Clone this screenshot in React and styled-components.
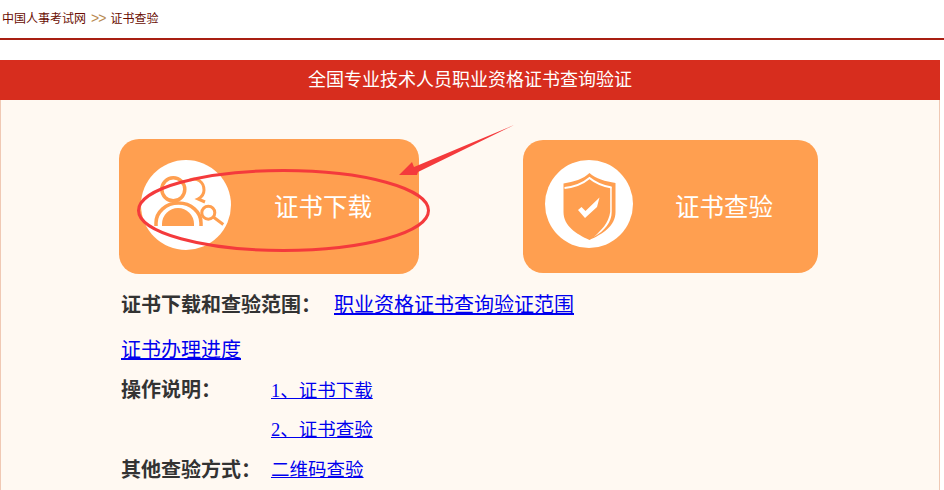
import React from "react";
import styled, { createGlobalStyle } from "styled-components";

const GlobalStyle = createGlobalStyle`
  html, body {
    margin: 0;
    padding: 0;
    background: #fff;
    font-family: "Liberation Serif", "Noto Sans CJK SC", serif;
  }
`;

const Page = styled.div`
  position: relative;
  width: 944px;
  height: 490px;
  overflow: hidden;
`;

const Crumbs = styled.div`
  display: flex;
  align-items: center;
  box-sizing: border-box;
  height: 38px;
  padding: 0 0 3px 2px;
  font-size: 12px;
  color: #6a0d02;
  box-shadow: 0 2px 0 #a81f12;
  margin-bottom: 22px;
`;

const Sep = styled.span`
  margin: 0 5px;
  color: #b98a52;
  font-size: 14px;
  letter-spacing: -1px;
  font-family: "Liberation Sans", sans-serif;
`;

const Main = styled.div`
  width: 940px;
  height: 430px;
`;

const Banner = styled.div`
  height: 40px;
  line-height: 40px;
  text-align: center;
  font-size: 18px;
  color: #fff;
  background: #d72d1e;
`;

const Body = styled.div`
  box-sizing: border-box;
  height: 390px;
  padding: 39px 0 0 118px;
  background: #fff9f2;
  border-left: 1px solid #f0c9b4;
  border-right: 1px solid #f0c9b4;
`;

const Cards = styled.div`
  display: flex;
  align-items: center;
  gap: 104px;
`;

const Card = styled.a`
  display: flex;
  align-items: center;
  gap: ${props => props.$gap}px;
  box-sizing: border-box;
  width: ${props => props.$w}px;
  height: ${props => props.$h}px;
  padding-left: 22px;
  border-radius: 20px;
  background: #ff9f50;
  color: #fff;
  font-size: 24.5px;
`;

const CardText = styled.span`
  margin-bottom: 2px;
`;

const Disc = styled.div`
  flex: none;
  width: ${props => props.$size}px;
  height: ${props => props.$size}px;
  margin-bottom: ${props => props.$lift}px;
  border-radius: 50%;
  background: #fff;
  svg {
    display: block;
    width: 100%;
    height: 100%;
  }
`;

const Rows = styled.div`
  margin-top: 9px;
  padding-left: 2px;
`;

const Row = styled.div`
  display: flex;
  align-items: center;
  height: ${props => props.$h || 40}px;
  margin-top: ${props => props.$mt || 0}px;
  padding-left: ${props => props.$indent || 0}px;
`;

const Label = styled.b`
  width: ${props => props.$w}px;
  flex: none;
  font-size: 20px;
  color: #333;
`;

const Link = styled.a`
  color: #0000ee;
  text-decoration: underline;
  font-size: ${props => props.$size || 18.5}px;
`;

const Marks = styled.svg`
  position: absolute;
  left: 0;
  top: 0;
  width: 944px;
  height: 490px;
  pointer-events: none;
`;

const PersonIcon = () => (
  <svg viewBox="0 0 90 90" fill="none" stroke="#ff9f50" strokeWidth="3.5">
    <circle cx="32.3" cy="29.3" r="11.5" />
    <path d="M15 66v-3a22.500 20 0 0 1 45 0v3" />
    <path d="M21 66v-2a16 16 0 0 1 32 0v2z" fill="#ff9f50" stroke="none" />
    <path d="M49 20c7-3 14 2 14 10 0 4-2 7-6 9l7 3" strokeWidth="3" />
    <circle cx="67.300" cy="52.700" r="6.500" strokeWidth="3" fill="#fff" />
    <path d="M72.300 57l10 7.500" strokeWidth="3" />
  </svg>
);

const ShieldIcon = () => (
  <svg viewBox="0 0 88 88">
    <path
      d="M44.500 13c6 5.500 16 8.500 26 10V52c0 14-13 22-26 28-13-6-26-14-26-28V23.500c10-1.500 20-4.500 26-10.500z"
      fill="#ff9f50"
    />
    <path d="M19.500 28c9-1 18-4 25-10 6 5 13 8 22 9.500" fill="none" stroke="#fff" strokeWidth="2" />
    <path d="M66.700 27V52c0 10-7 19-18 25 7-6 15-14 16.500-25V27z" fill="#fff" />
    <path d="M33 50l3.500-3 4 4L54.500 37.500 52 47 40 58z" fill="#fff" />
  </svg>
);

const App = () => {
  return (
    <Page>
      <GlobalStyle />
      <Crumbs>
        中国人事考试网<Sep>&gt;&gt;</Sep>证书查验
      </Crumbs>
      <Main>
        <Banner>全国专业技术人员职业资格证书查询验证</Banner>
        <Body>
          <Cards>
            <Card $w={300} $h={135} $gap={43}>
              <Disc $size={90} $lift={3}>
                <PersonIcon />
              </Disc>
              <CardText>证书下载</CardText>
            </Card>
            <Card $w={295} $h={133} $gap={42}>
              <Disc $size={88} $lift={5}>
                <ShieldIcon />
              </Disc>
              <CardText>证书查验</CardText>
            </Card>
          </Cards>
          <Rows>
            <Row>
              <Label $w={213}>证书下载和查验范围：</Label>
              <Link $size={20}>职业资格证书查询验证范围</Link>
            </Row>
            <Row $mt={5} $h={40}>
              <Link $size={20}>证书办理进度</Link>
            </Row>
            <Row $mt={1} $h={39}>
              <Label $w={150}>操作说明：</Label>
              <Link>1、证书下载</Link>
            </Row>
            <Row $h={40} $indent={150}>
              <Link>2、证书查验</Link>
            </Row>
            <Row>
              <Label $w={150}>其他查验方式：</Label>
              <Link>二维码查验</Link>
            </Row>
          </Rows>
        </Body>
      </Main>
      <Marks viewBox="0 0 944 490">
        <ellipse cx="283.500" cy="210.500" rx="145" ry="40" fill="none" stroke="#f43a3c" strokeWidth="3" />
        <polygon points="399,175 412,162 414,167 514,125 418,172 417,175" fill="#f43a3c" />
      </Marks>
    </Page>
  );
};

export default App;
